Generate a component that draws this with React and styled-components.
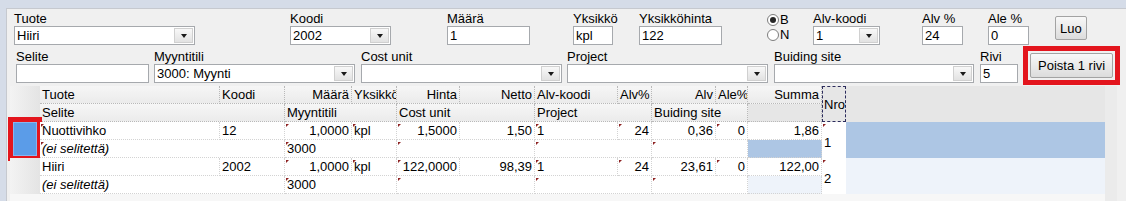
import React from "react";
import styled, { createGlobalStyle } from "styled-components";

const GlobalStyle = createGlobalStyle`
  html, body {
    margin: 0;
    padding: 0;
    background: #d5dce8;
    overflow: hidden;
  }
  body {
    font-family: "Liberation Sans", Arial, sans-serif;
    font-size: 13px;
    color: #000;
  }
  * {
    box-sizing: border-box;
  }
`;

const Page = styled.div`
  height: 201px;
  padding: 8px 0 0 6px;
`;

const Panel = styled.div`
  height: 100%;
  background: #f0f0f0;
  border: 1px solid #c6c9cf;
  border-bottom: none;
  border-right: none;
  display: flex;
  flex-direction: column;
`;

const FormRow = styled.div`
  display: flex;
  align-items: flex-start;
  margin-top: ${(p) => p.$top}px;
  height: 33px;
`;

const Field = styled.div`
  display: flex;
  flex-direction: column;
  width: ${(p) => p.$w}px;
  margin-left: ${(p) => p.$ml}px;
  flex-shrink: 0;
`;

const Label = styled.div`
  height: 14px;
  line-height: 14px;
  white-space: nowrap;
`;

const TextBox = styled.input`
  width: 100%;
  height: 19px;
  border: 1px solid #a6a9ad;
  background: #fff;
  padding: 0 2px;
  font: inherit;
  line-height: 17px;
  outline: none;
`;

const SelectBox = styled.div`
  display: flex;
  width: 100%;
  height: 19px;
  border: 1px solid #a6a9ad;
  background: #fff;
`;

const SelectValue = styled.div`
  flex: 1;
  padding: 0 2px;
  line-height: 17px;
  white-space: nowrap;
  overflow: hidden;
`;

const SelectArrow = styled.div`
  width: 19px;
  margin: 1px;
  display: flex;
  align-items: center;
  justify-content: center;
  background: linear-gradient(#f8f8f8, #e2e2e2);
  border: 1px solid #d0d0d0;

  &::after {
    content: "";
    border-left: 3.5px solid transparent;
    border-right: 3.5px solid transparent;
    border-top: 4px solid #1a1a1a;
  }
`;

const RadioGroup = styled.div`
  display: flex;
  flex-direction: column;
  gap: 2px;
  width: 32px;
  margin-left: ${(p) => p.$ml}px;
  margin-top: 1px;
`;

const RadioItem = styled.div`
  display: flex;
  align-items: center;
  height: 13px;
  line-height: 13px;
  gap: 1px;
`;

const RadioCircle = styled.span`
  width: 12px;
  height: 12px;
  border-radius: 50%;
  border: 1px solid #7d7d7d;
  background: #fff;
  display: flex;
  align-items: center;
  justify-content: center;

  &::after {
    content: "";
    display: ${(p) => (p.$on ? "block" : "none")};
    width: 6px;
    height: 6px;
    border-radius: 50%;
    background: #262626;
  }
`;

const Button = styled.button`
  height: ${(p) => p.$h}px;
  padding: 0 ${(p) => p.$px}px;
  font: inherit;
  color: #000;
  background: linear-gradient(#f8f8f8, #dcdcdc);
  border: 1px solid #a3a3a3;
  border-radius: 2px;
`;

const ButtonSlot = styled.div`
  position: relative;
  display: flex;
  flex-shrink: 0;
  margin-left: ${(p) => p.$ml}px;
  margin-top: ${(p) => p.$mt}px;

  &::after {
    content: "";
    display: ${(p) => (p.$marked ? "block" : "none")};
    position: absolute;
    inset: -7px;
    border: 5px solid #e3151d;
    pointer-events: none;
  }
`;

const Grid = styled.div`
  flex: 1;
  margin: 3px 9px 0 3px;
  display: grid;
  grid-template-columns: 30px 180px 65px 67px 45px 63px 75px 83px 34px 64px 32px 74px 24px 1fr;
  grid-template-rows: 18px 18px 18px 18px 18px 18px 1fr;
  background: #f7f7f7;
  border-right: 12px solid #ebebeb;
`;

const Cell = styled.div`
  position: relative;
  grid-column: span ${(p) => p.$span || 1};
  grid-row: span ${(p) => p.$rows || 1};
  padding: 0 ${(p) => (p.$right ? 2 : 3)}px 0 2px;
  text-align: ${(p) => (p.$right ? "right" : "left")};
  white-space: nowrap;
  overflow: hidden;
  line-height: 17px;
  font-style: ${(p) => (p.$italic ? "italic" : "normal")};
  background: ${(p) => p.$bg || "#fff"};
  border-right: 1px dotted ${(p) => (p.$head ? "#b9b9b9" : "#d3d3d3")};
  border-bottom: 1px dotted ${(p) => (p.$head ? "#b9b9b9" : "#d3d3d3")};

  &::before {
    content: "";
    display: ${(p) => (p.$mark ? "block" : "none")};
    position: absolute;
    top: 2px;
    left: 1px;
    border-top: 3px solid #8e2323;
    border-right: 3px solid transparent;
  }
`;

const NroHead = styled.div`
  grid-row: span 2;
  border: 1px dashed #2b2b5c;
  background: #e6e6e6;
  display: flex;
  align-items: center;
  padding-left: 1px;
`;

const NroCell = styled.div`
  position: relative;
  grid-row: span 2;
  background: #fff;
  display: flex;
  align-items: center;
  padding: 5px 0 0 2px;

  &::before {
    content: "";
    position: absolute;
    top: 2px;
    left: 1px;
    border-top: 3px solid #8e2323;
    border-right: 3px solid transparent;
  }
`;

const Filler = styled.div`
  grid-row: span 2;
  background: ${(p) => p.$bg};
`;

const RowHead = styled.div`
  grid-row: span 2;
  background: linear-gradient(to right, #f3f3f3, #e4e4e4);
  position: relative;
`;

const Selector = styled.div`
  position: absolute;
  left: 3px;
  right: 3px;
  top: 0;
  bottom: 2px;
  background: #5b9ce8;
  border: 1px solid #87b5ee;
  outline: 5px solid #e3151d;
`;

const BLUE = "#adc6e4";
const LIGHT = "#eef3fa";
const HEAD = "linear-gradient(#f6f6f6, #ebebeb)";

const head1 = [
  { t: "Tuote" },
  { t: "Koodi" },
  { t: "Määrä", r: true },
  { t: "Yksikkö" },
  { t: "Hinta", r: true },
  { t: "Netto", r: true },
  { t: "Alv-koodi" },
  { t: "Alv%", r: true },
  { t: "Alv", r: true },
  { t: "Ale%", r: true },
  { t: "Summa", r: true },
];

const head2 = [
  { t: "Selite", s: 2 },
  { t: "Myyntitili", s: 2 },
  { t: "Cost unit", s: 2 },
  { t: "Project", s: 2 },
  { t: "Buiding site", s: 2 },
  { t: "", s: 1, bg: "#e6e6e6" },
];

const rows = [
  {
    nro: "1",
    selected: true,
    values: ["Nuottivihko", "12", "1,0000", "kpl", "1,5000", "1,50", "1", "24", "0,36", "0", "1,86"],
  },
  {
    nro: "2",
    values: ["Hiiri", "2002", "1,0000", "kpl", "122,0000", "98,39", "1", "24", "23,61", "0", "122,00"],
  },
];

const marks = [false, false, true, true, true, false, true, true, false, true, false];

function Select({ value }) {
  return (
    <SelectBox>
      <SelectValue>{value}</SelectValue>
      <SelectArrow />
    </SelectBox>
  );
}

export default function App() {
  return (
    <>
      <GlobalStyle />
      <Page>
        <Panel>
          <FormRow $top={3}>
            <Field $w={181} $ml={7}>
              <Label>Tuote</Label>
              <Select value="Hiiri" />
            </Field>
            <Field $w={101} $ml={95}>
              <Label>Koodi</Label>
              <Select value="2002" />
            </Field>
            <Field $w={83} $ml={56}>
              <Label>Määrä</Label>
              <TextBox readOnly value="1" />
            </Field>
            <Field $w={40} $ml={43}>
              <Label>Yksikkö</Label>
              <TextBox readOnly value="kpl" />
            </Field>
            <Field $w={83} $ml={26}>
              <Label>Yksikköhinta</Label>
              <TextBox readOnly value="122" />
            </Field>
            <RadioGroup $ml={45}>
              <RadioItem>
                <RadioCircle $on />B
              </RadioItem>
              <RadioItem>
                <RadioCircle />N
              </RadioItem>
            </RadioGroup>
            <Field $w={67} $ml={14}>
              <Label>Alv-koodi</Label>
              <Select value="1" />
            </Field>
            <Field $w={41} $ml={42}>
              <Label>Alv %</Label>
              <TextBox readOnly value="24" />
            </Field>
            <Field $w={41} $ml={25}>
              <Label>Ale %</Label>
              <TextBox readOnly value="0" />
            </Field>
            <ButtonSlot $ml={26} $mt={4}>
              <Button $h={24} $px={4}>
                Luo
              </Button>
            </ButtonSlot>
          </FormRow>

          <FormRow $top={5}>
            <Field $w={133} $ml={9}>
              <Label>Selite</Label>
              <TextBox readOnly value="" />
            </Field>
            <Field $w={201} $ml={5}>
              <Label>Myyntitili</Label>
              <Select value="3000: Myynti" />
            </Field>
            <Field $w={201} $ml={6}>
              <Label>Cost unit</Label>
              <Select value="" />
            </Field>
            <Field $w={201} $ml={5}>
              <Label>Project</Label>
              <Select value="" />
            </Field>
            <Field $w={200} $ml={6}>
              <Label>Buiding site</Label>
              <Select value="" />
            </Field>
            <Field $w={38} $ml={6}>
              <Label>Rivi</Label>
              <TextBox readOnly value="5" />
            </Field>
            <ButtonSlot $ml={12} $mt={3} $marked>
              <Button $h={25} $px={7}>
                Poista 1 rivi
              </Button>
            </ButtonSlot>
          </FormRow>

          <Grid>
            <RowHead />
            {head1.map((h) => (
              <Cell key={h.t} $head $right={h.r} $bg={HEAD}>
                {h.t}
              </Cell>
            ))}
            <NroHead>Nro</NroHead>
            <Filler $bg="#e6e6e6" />
            {head2.map((h, i) => (
              <Cell key={i} $head $span={h.s} $bg={h.bg || HEAD}>
                {h.t}
              </Cell>
            ))}

            {rows.map((row) => (
              <React.Fragment key={row.nro}>
                <RowHead>{row.selected && <Selector />}</RowHead>
                {row.values.map((v, i) => (
                  <Cell
                    key={i}
                    $right={i >= 2 && i !== 3 && i !== 6}
                    $mark={marks[i] || (row.selected && i === 0)}
                  >
                    {v}
                  </Cell>
                ))}
                <NroCell>{row.nro}</NroCell>
                <Filler $bg={row.selected ? BLUE : LIGHT} />
                <Cell $span={2} $italic $mark={row.selected}>
                  (ei selitettä)
                </Cell>
                <Cell $span={2} $mark>
                  3000
                </Cell>
                <Cell $span={2} $mark />
                <Cell $span={2} $mark />
                <Cell $span={2} $mark />
                <Cell $bg={row.selected ? BLUE : LIGHT} />
              </React.Fragment>
            ))}
          </Grid>
        </Panel>
      </Page>
    </>
  );
}
